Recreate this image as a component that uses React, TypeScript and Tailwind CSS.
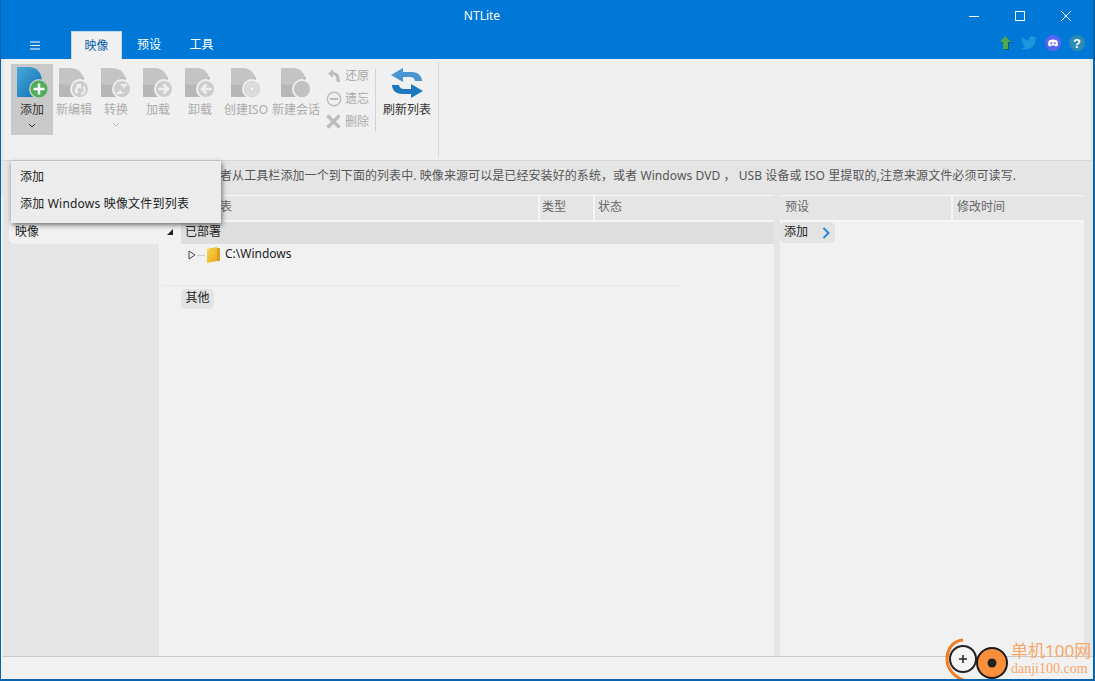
import React from "react";

const FONT = { fontFamily: '"Noto Sans", "Noto Sans CJK SC", sans-serif' };

function GrayDisc({ children }: { children: React.ReactNode }) {
  return (
    <svg width="32" height="32" viewBox="0 0 32 32" className="block">
      <path d="M1 1h11c9 0 14 6 14 15v14H2a1 1 0 0 1-1-1z" fill="#c4c4c4" />
      <path d="M1 17c8 3 16 0 25-7v20H2a1 1 0 0 1-1-1z" fill="#b7b7b7" />
      <circle cx="22" cy="22" r="10" fill="#f0f0f0" />
      <circle cx="22" cy="22" r="8" fill="#cdcdcd" />
      {children}
    </svg>
  );
}

function ToolButton({ label, glyph, chevron, className }: { label: string; glyph: React.ReactNode; chevron?: boolean; className: string }) {
  return (
    <div className={`shrink-0 flex flex-col items-center pt-[8px] ${className}`}>
      <GrayDisc>{glyph}</GrayDisc>
      <span className="text-[12px] leading-[16px] mt-[3px] whitespace-nowrap text-[#ababab]">{label}</span>
      {chevron && (
        <svg width="8" height="5" viewBox="0 0 8 5" className="mt-[4px]">
          <path d="M1 1l3 3 3-3" fill="none" stroke="#bdbdbd" strokeWidth="1" />
        </svg>
      )}
    </div>
  );
}

function SmallAction({ icon, label }: { icon: React.ReactNode; label: string }) {
  return (
    <div className="h-[23px] flex items-center gap-[3px] whitespace-nowrap">
      <span className="w-[17px] h-[17px] flex items-center justify-center shrink-0">{icon}</span>
      <span className="text-[12px] text-[#ababab] leading-none">{label}</span>
    </div>
  );
}

export default function App() {
  return (
    <div className="w-[1095px] h-[681px] relative overflow-hidden bg-[#f1f1f1] flex flex-col border-l border-r-2 border-b-2 border-[#0a64ad] text-[12px] text-[#222]" style={FONT}>
      {/* Title bar */}
      <div className="h-[31px] shrink-0 bg-[#0078d7] flex items-center">
        <div className="flex-1 text-center text-white text-[12px] pl-[12px]">NTLite</div>
        <div className="flex items-center h-full pr-[4px]">
          <div className="w-[46px] h-full flex items-center justify-center">
            <svg width="10" height="10" viewBox="0 0 10 10"><path d="M0 5.500h10" stroke="#fff" /></svg>
          </div>
          <div className="w-[46px] h-full flex items-center justify-center">
            <svg width="10" height="10" viewBox="0 0 10 10"><rect x="0.500" y="0.500" width="9" height="9" fill="none" stroke="#fff" /></svg>
          </div>
          <div className="w-[46px] h-full flex items-center justify-center">
            <svg width="10" height="10" viewBox="0 0 10 10"><path d="M0 0l10 10M10 0L0 10" stroke="#fff" /></svg>
          </div>
        </div>
      </div>

      {/* Tabs row */}
      <div className="h-[28px] shrink-0 bg-[#0078d7] flex items-end">
        <div className="w-[70px] h-full flex items-center justify-center pr-[3px]">
          <svg width="10" height="9" viewBox="0 0 10 9"><path d="M0 1h10M0 4.500h10M0 8h10" stroke="#fff" /></svg>
        </div>
        <div className="w-[51px] h-full bg-[#f0f0f0] border-x border-t border-[#bcd9ee] flex items-center justify-center text-[12px] text-[#0a5ea8]">映像</div>
        <div className="w-[54px] h-full flex items-center justify-center text-white text-[12px]">预设</div>
        <div className="w-[51px] h-full flex items-center justify-center text-white text-[12px]">工具</div>
        <div className="flex-1" />
        <div className="flex items-center gap-[8px] h-full pr-[8px] pb-[4px]">
          <svg width="16" height="16" viewBox="0 0 16 16">
            <path d="M9 2l6 6h-3v7H7V8H4z" fill="#0b5f63" />
            <path d="M8 1l6 6h-3v7H6V7H3z" fill="#4fa84f" />
          </svg>
          <svg width="16" height="14" viewBox="0 0 24 20">
            <path d="M24 2.400a10 10 0 0 1-2.800.8A5 5 0 0 0 23.300.5a10 10 0 0 1-3.100 1.200 4.900 4.900 0 0 0-8.400 4.500A14 14 0 0 1 1.700 1a4.900 4.900 0 0 0 1.500 6.600 5 5 0 0 1-2.200-.6c0 2.400 1.700 4.400 4 4.900a5 5 0 0 1-2.200.1 4.900 4.900 0 0 0 4.600 3.400A10 10 0 0 1 0 17.400 14 14 0 0 0 7.500 19.600c9.100 0 14-7.500 14-14v-.6A10 10 0 0 0 24 2.400z" fill="#1e96dc" />
          </svg>
          <svg width="16" height="16" viewBox="0 0 16 16">
            <circle cx="8" cy="8" r="8" fill="#5865f2" />
            <path d="M4 5.500c2.500-1.200 5.500-1.200 8 0 .8 1.800 1 3.300.8 5-1 .6-1.700.8-2.300.9l-.6-.9H6.100l-.6.900c-.6-.1-1.300-.3-2.300-.9-.2-1.700 0-3.200.8-5z" fill="#fff" />
            <circle cx="6.300" cy="8.300" r="1" fill="#5865f2" />
            <circle cx="9.700" cy="8.300" r="1" fill="#5865f2" />
          </svg>
          <span className="w-[16px] h-[16px] rounded-full bg-[#2d8ab5] flex items-center justify-center text-white font-bold text-[13px] leading-none" style={{ fontFamily: '"Liberation Sans", sans-serif' }}>?</span>
        </div>
      </div>

      {/* Toolbar */}
      <div className="h-[102px] shrink-0 bg-[#f0f0f0] border-x-[3px] border-x-[#e8e8e8] border-b border-b-[#d6d6d6] flex pl-[7px]">
        <div className="w-[42px] h-[71px] mt-[5px] bg-[#c9c9c9] flex flex-col items-center pt-[2px] shrink-0">
          <svg width="32" height="33" viewBox="0 0 32 33" className="block">
            <defs>
              <linearGradient id="g-main" x1="0" y1="0" x2="1" y2="1">
                <stop offset="0" stopColor="#4aa8d8" />
                <stop offset="1" stopColor="#0a6fb5" />
              </linearGradient>
            </defs>
            <path d="M1 1h11c9 0 14 6 14 15v15H2a1 1 0 0 1-1-1z" fill="url(#g-main)" />
            <circle cx="23" cy="23" r="10" fill="#c9c9c9" />
            <circle cx="23" cy="23" r="8.500" fill="#4fae5a" />
            <path d="M23 17.500v11M17.500 23h11" stroke="#fff" strokeWidth="2.500" />
          </svg>
          <span className="text-[12px] leading-[16px] mt-[3px] text-[#333]">添加</span>
          <svg width="8" height="5" viewBox="0 0 8 5" className="mt-[5px]">
            <path d="M1 1l3 3 3-3" fill="none" stroke="#333" strokeWidth="1" />
          </svg>
        </div>
        <ToolButton className="w-[42px]" label="新编辑" glyph={<path d="M18 27a6 6 0 0 1 1-8l-1-2h5v5l-2-1.500a4 4 0 0 0-.5 5zM26 27a6 6 0 0 0 0-8l-1.500 1.500a4 4 0 0 1 .5 5l-2 .5 0 2z" fill="#f0f0f0" />} />
        <ToolButton className="w-[42px]" label="转换" chevron glyph={<path d="M16 27l5-5v3h3l-2 2zM28 17l-5 5v-3h-3l2-2z" fill="#f0f0f0" />} />
        <ToolButton className="w-[42px]" label="加载" glyph={<path d="M16.500 22h9M21.500 17.500L26 22l-4.500 4.500" fill="none" stroke="#f0f0f0" strokeWidth="2.500" />} />
        <ToolButton className="w-[42px]" label="卸载" glyph={<path d="M27.500 22h-9M22.500 17.500L18 22l4.500 4.500" fill="none" stroke="#f0f0f0" strokeWidth="2.500" />} />
        <ToolButton className="w-[46px] ml-[2px]" label="创建ISO" glyph={<><circle cx="22" cy="22" r="7.500" fill="#dcdcdc" /><circle cx="22" cy="22" r="2.500" fill="#f0f0f0" stroke="#c0c0c0" strokeWidth="0.700" /></>} />
        <ToolButton className="w-[50px] ml-[2px]" label="新建会话" glyph={<circle cx="22" cy="22" r="8" fill="#c2c2c2" />} />
        <div className="flex flex-col pt-[5px] pl-[4px] w-[54px] shrink-0">
          <SmallAction label="还原" icon={<svg width="14" height="15" viewBox="0 0 14 15"><path d="M6 1L1 5.500 6 10V7c2.500 0 3.500 1.500 3.500 7H13c0-6-2-10-7-10z" fill="#bdbdbd" /></svg>} />
          <SmallAction label="遗忘" icon={<svg width="16" height="16" viewBox="0 0 16 16"><circle cx="8" cy="8" r="6.700" fill="none" stroke="#bdbdbd" strokeWidth="1.500" /><path d="M4 8h8" stroke="#bdbdbd" strokeWidth="2" /></svg>} />
          <SmallAction label="删除" icon={<svg width="15" height="15" viewBox="0 0 15 15"><path d="M1.500 1.500l12 12M13.500 1.500l-12 12" stroke="#bdbdbd" strokeWidth="3.500" /></svg>} />
        </div>
        <div className="w-px h-[62px] mt-[10px] bg-[#d2d2d2] shrink-0" />
        <div className="w-[62px] shrink-0 flex flex-col items-center pt-[8px] text-[#333]">
          <svg width="34" height="32" viewBox="0 0 34 32">
            <path d="M1 8l12-7v4h9c6 0 10 4 10 9h-7c0-2-2-4-5-4h-7v5z" fill="#4a94cf" />
            <path d="M33 24l-12 7v-4h-9C6 27 2 23 2 18h7c0 2 2 4 5 4h7v-5z" fill="#1e78bd" />
          </svg>
          <span className="text-[12px] leading-[16px] mt-[3px] whitespace-nowrap">刷新列表</span>
        </div>
        <div className="w-px h-[95px] mt-[3px] bg-[#d8d8d8] shrink-0" />
      </div>

      {/* Info */}
      <div className="h-[33px] shrink-0 bg-[#e5e5e5] flex items-center pl-[219px] pb-[3px] text-[12px] text-[#555] whitespace-nowrap tracking-[0.08px]">
        者从工具栏添加一个到下面的列表中. 映像来源可以是已经安装好的系统，或者 Windows DVD ， USB 设备或 ISO 里提取的,注意来源文件必须可读写.
      </div>

      {/* Main */}
      <div className="flex-1 min-h-0 flex bg-[#e5e5e5] border-l-2 border-l-[#f1f1f1]">
        <div className="w-[156px] shrink-0 flex flex-col pt-[27px] pl-[6px]">
          <div className="h-[23px] bg-[#f1f1f1] rounded-bl-[6px] flex items-center justify-between pl-[6px] pr-[7px] pb-[2px] -mr-[21px] relative">
            <span>映像</span>
            <svg width="6" height="6" viewBox="0 0 6 6"><path d="M6 0v6H0z" fill="#222" /></svg>
          </div>
        </div>
        <div className="w-[615px] shrink-0 mt-[1px] bg-[#f1f1f1] flex flex-col">
          <div className="h-[27px] bg-[#e5e5e5] flex text-[#666] border-t border-b-2 border-[#f5f5f5] ml-[22px]">
            <div className="w-[359px] border-r-2 border-[#f5f5f5] flex items-center pl-[39px] pb-[2px]">表</div>
            <div className="w-[55px] border-r-2 border-[#f5f5f5] flex items-center pl-[2px] pb-[2px]">类型</div>
            <div className="flex-1 flex items-center pl-[3px] pb-[2px]">状态</div>
          </div>
          <div className="h-[22px] bg-[#dedede] ml-[22px] flex items-center pl-[4px] pb-[3px] text-[#222]">已部署</div>
          <div className="h-[22px] ml-[29px] flex items-center">
            <svg width="8" height="10" viewBox="0 0 8 10"><path d="M1 1l6 4-6 4z" fill="none" stroke="#444" /></svg>
            <span className="w-[8px] h-px bg-[#ccc] ml-[1px] mr-[2px]" />
            <svg width="13" height="16" viewBox="0 0 13 16" className="mr-[5px]">
              <defs>
                <linearGradient id="g-folder" x1="0" y1="0" x2="1" y2="1">
                  <stop offset="0" stopColor="#fbd650" />
                  <stop offset="1" stopColor="#e9a81a" />
                </linearGradient>
              </defs>
              <path d="M3 1h9a1 1 0 0 1 1 1v11a1 1 0 0 1-1 1H3z" fill="#d9a01c" />
              <path d="M0 2l10-2v14L0 16z" fill="url(#g-folder)" />
            </svg>
            <span className="text-[#222] pb-[2px]">C:\Windows</span>
          </div>
          <div className="h-px bg-[#e8e8e8] mt-[19px] w-[520px] ml-[2px]" />
          <div className="mt-[3px] ml-[22px] w-[33px] h-[20px] bg-[#e3e3e3] rounded-[5px] flex items-center justify-center pb-[2px] text-[#222]">其他</div>
        </div>
        <div className="w-[6px] shrink-0" />
        <div className="w-[304px] shrink-0 mt-[1px] bg-[#f1f1f1] flex flex-col">
          <div className="h-[27px] bg-[#e5e5e5] flex text-[#666] border-t border-b-2 border-[#f5f5f5]">
            <div className="w-[173px] border-r-2 border-[#f5f5f5] flex items-center pl-[5px] pb-[2px]">预设</div>
            <div className="flex-1 flex items-center pl-[4px] pb-[2px]">修改时间</div>
          </div>
          <div className="w-[55px] h-[21px] bg-[#e3e3e3] rounded-[5px] flex items-center justify-between pl-[4px] pr-[5px] text-[#222]">
            <span className="pb-[2px]">添加</span>
            <svg width="8" height="12" viewBox="0 0 8 12"><path d="M1.500 1l5 5-5 5" fill="none" stroke="#2a86d8" strokeWidth="2" /></svg>
          </div>
        </div>
      </div>

      {/* Status bar */}
      <div className="h-[23px] shrink-0 bg-[#f1f1f1] border-t border-[#c8c8c8] ml-[2px]" />

      {/* Dropdown menu */}
      <div className="absolute left-[10px] top-[161px] w-[210px] h-[62px] bg-[#ececec] pt-[1px] shadow-[1px_2px_5px_rgba(0,0,0,0.55)] flex flex-col text-[12px] text-[#222]">
        <div className="h-[30px] flex items-center pl-[9px]">添加</div>
        <div className="h-[24px] flex items-center pl-[9px] whitespace-nowrap tracking-[0.2px]">添加 Windows 映像文件到列表</div>
      </div>

      {/* Watermark */}
      <div className="absolute right-0 -bottom-[2px] w-[150px] h-[46px] flex items-start">
        <svg width="66" height="46" viewBox="0 0 66 46" className="shrink-0">
          <path d="M20 5C9 6 4 15 4 24s6 17 16 21" fill="none" stroke="#f47a1f" strokeWidth="3" />
          <circle cx="20" cy="24" r="13" fill="#f4f4f4" stroke="#222" strokeWidth="2" />
          <path d="M20 20v8M16 24h8" stroke="#222" strokeWidth="1.500" />
          <circle cx="49" cy="28" r="15" fill="#fb8f3c" stroke="#1a1a1a" strokeWidth="2" />
          <circle cx="49" cy="28" r="4.500" fill="#222" />
        </svg>
        <div className="flex flex-col ml-[2px] leading-none pt-[6px]">
          <span className="text-[17px] text-[#f7a76a] leading-[20px] whitespace-nowrap">单机100网</span>
          <span className="text-[14px] text-[#f7a76a] leading-[16px]" style={{ fontFamily: '"Liberation Serif", serif' }}>danji100.com</span>
        </div>
      </div>
    </div>
  );
}
